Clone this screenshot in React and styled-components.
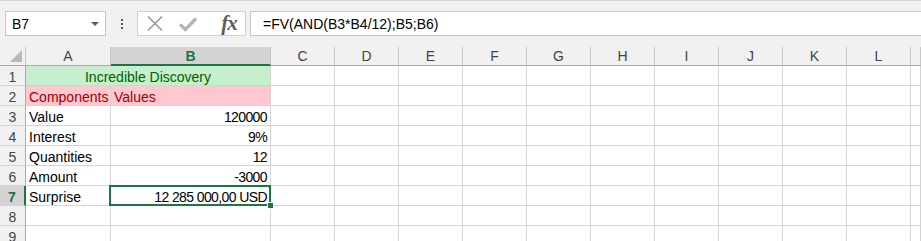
import React from 'react'
import styled, { createGlobalStyle, css } from 'styled-components'

const GREEN = '#217346'

const GlobalStyle = createGlobalStyle`
  html, body {
    margin: 0;
    padding: 0;
    background: #ffffff;
    overflow: hidden;
  }
  body {
    font-family: "Liberation Sans", Arial, sans-serif;
  }
`

const Page = styled.div`
  width: 921px;
  height: 241px;
  overflow: hidden;
  background: #ffffff;
`

const Toolbar = styled.div`
  box-sizing: border-box;
  height: 47px;
  display: flex;
  align-items: flex-start;
  padding: 10px 0 0 5px;
  background: #f1f1f1;
  border-top: 1px solid #d4d4d4;
`

const NameBox = styled.div`
  box-sizing: border-box;
  width: 101px;
  height: 25px;
  display: flex;
  align-items: center;
  justify-content: space-between;
  padding: 0 6px 0 6px;
  background: #ffffff;
  border: 1px solid #c6c6c6;
  font-size: 14px;
  color: #000;
`

const Caret = styled.span`
  width: 0;
  height: 0;
  border-left: 4px solid transparent;
  border-right: 4px solid transparent;
  border-top: 4px solid #5a5a5a;
`

const Dots = styled.div`
  width: 31px;
  height: 25px;
  display: flex;
  flex-direction: column;
  align-items: center;
  justify-content: center;
  gap: 2px;

  span {
    width: 2px;
    height: 2px;
    background: #5a5a5a;
  }
`

const FormulaButtons = styled.div`
  box-sizing: border-box;
  width: 109px;
  height: 25px;
  display: flex;
  align-items: center;
  padding-left: 8px;
  background: #ffffff;
  border: 1px solid #d0d0d0;
`

const IconSlot = styled.div`
  display: flex;
  align-items: center;
  justify-content: center;
  width: ${p => p.$w}px;
  margin-right: ${p => p.$gap || 0}px;
`

const Fx = styled.span`
  font-family: "Liberation Serif", "Times New Roman", serif;
  font-style: italic;
  font-weight: bold;
  font-size: 21px;
  line-height: 1;
  color: #5c5c5c;
  letter-spacing: -1px;
`

const FormulaInput = styled.div`
  box-sizing: border-box;
  flex: 1;
  height: 25px;
  margin-left: 4px;
  display: flex;
  align-items: center;
  padding-left: 12px;
  background: #ffffff;
  border: 1px solid #c6c6c6;
  border-right: none;
  font-size: 14px;
  color: #000;
`

const Sheet = styled.div`
  display: grid;
  grid-template-columns: 26px 85px 160px repeat(10, 64px) 1fr;
  grid-auto-rows: 20px;
  grid-template-rows: 19px;
  font-size: 14px;
`

const ColHead = styled.div`
  box-sizing: border-box;
  display: flex;
  align-items: center;
  justify-content: center;
  background: #f1f1f1;
  color: #444444;
  border-right: 1px solid #c8c8c8;
  border-bottom: 1px solid #ababab;
  ${p => p.$active && css`
    background: #d3d3d3;
    color: ${GREEN};
    font-weight: bold;
    border-bottom: 2px solid ${GREEN};
  `}
`

const Corner = styled.div`
  box-sizing: border-box;
  position: relative;
  background: #f1f1f1;
  border-right: 1px solid #c8c8c8;
  border-bottom: 1px solid #ababab;

  &::after {
    content: '';
    position: absolute;
    right: 3px;
    bottom: 3px;
    width: 0;
    height: 0;
    border-left: 12px solid transparent;
    border-bottom: 12px solid #b9b9b9;
  }
`

const RowHead = styled.div`
  box-sizing: border-box;
  display: flex;
  align-items: center;
  justify-content: center;
  padding-top: 2px;
  background: #f1f1f1;
  color: #444444;
  border-right: 1px solid #ababab;
  border-bottom: 1px solid #d4d4d4;
  ${p => p.$active && css`
    background: #d3d3d3;
    color: ${GREEN};
    font-weight: bold;
    border-right: 2px solid ${GREEN};
  `}
`

const Cell = styled.div`
  box-sizing: border-box;
  position: relative;
  display: flex;
  align-items: center;
  justify-content: ${p => (p.$align === 'right' ? 'flex-end' : p.$align === 'center' ? 'center' : 'flex-start')};
  padding: 2px 3px 0 3px;
  grid-column: ${p => (p.$span ? `span ${p.$span}` : 'auto')};
  background: ${p => p.$bg || '#ffffff'};
  color: ${p => p.$color || '#000000'};
  border-right: 1px solid #d4d4d4;
  border-bottom: 1px solid #d4d4d4;
  white-space: nowrap;
  letter-spacing: ${p => (p.$align === 'right' ? '-0.6px' : 'normal')};

  ${p => p.$selected && css`
    &::before {
      content: '';
      position: absolute;
      left: -2px;
      top: -1px;
      right: -1px;
      bottom: -1px;
      border: 2px solid ${GREEN};
      pointer-events: none;
    }
    &::after {
      content: '';
      position: absolute;
      right: -4px;
      bottom: -4px;
      width: 5px;
      height: 5px;
      background: ${GREEN};
      border: 1px solid #ffffff;
      z-index: 2;
    }
  `}
`

const columns = ['A', 'B', 'C', 'D', 'E', 'F', 'G', 'H', 'I', 'J', 'K', 'L']

const rows = [
  { n: 1, merged: { text: 'Incredible Discovery', bg: '#c6efce', color: '#006100' } },
  { n: 2, a: 'Components', b: 'Values', bg: '#ffc7ce', color: '#9c0006', bLeft: true },
  { n: 3, a: 'Value', b: '120000' },
  { n: 4, a: 'Interest', b: '9%' },
  { n: 5, a: 'Quantities', b: '12' },
  { n: 6, a: 'Amount', b: '-3000' },
  { n: 7, a: 'Surprise', b: '12 285 000,00 USD', selected: true },
  { n: 8 },
  { n: 9 },
]

const XIcon = () => (
  <svg width="18" height="17" viewBox="0 0 18 17">
    <path d="M2 1.5 L16 15.5 M16 1.5 L2 15.5" stroke="#9c9c9c" strokeWidth="1.7" fill="none" />
  </svg>
)

const CheckIcon = () => (
  <svg width="20" height="16" viewBox="0 0 20 16">
    <path d="M2 8.5 L7.5 13.5 L18 2.5" stroke="#b5b5b5" strokeWidth="3.4" fill="none" strokeLinejoin="miter" />
  </svg>
)

const SheetRow = ({ row }) => {
  const rest = columns.slice(2).map(c => <Cell key={c} />)
  return (
    <>
      <RowHead $active={row.selected}>{row.n}</RowHead>
      {row.merged ? (
        <Cell $span={2} $align="center" $bg={row.merged.bg} $color={row.merged.color}>
          {row.merged.text}
        </Cell>
      ) : (
        <>
          <Cell $bg={row.bg} $color={row.color}>{row.a}</Cell>
          <Cell $bg={row.bg} $color={row.color} $align={row.bLeft ? 'left' : 'right'} $selected={row.selected}>
            {row.b}
          </Cell>
        </>
      )}
      {rest}
      <Cell />
    </>
  )
}

export default function App() {
  return (
    <Page>
      <GlobalStyle />
      <Toolbar>
        <NameBox>
          B7
          <Caret />
        </NameBox>
        <Dots>
          <span />
          <span />
          <span />
        </Dots>
        <FormulaButtons>
          <IconSlot $w={18} $gap={14}><XIcon /></IconSlot>
          <IconSlot $w={20} $gap={22}><CheckIcon /></IconSlot>
          <IconSlot $w={18}><Fx>fx</Fx></IconSlot>
        </FormulaButtons>
        <FormulaInput>=FV(AND(B3*B4/12);B5;B6)</FormulaInput>
      </Toolbar>
      <Sheet>
        <Corner />
        {columns.map(c => (
          <ColHead key={c} $active={c === 'B'}>{c}</ColHead>
        ))}
        <ColHead />
        {rows.map(r => (
          <SheetRow key={r.n} row={r} />
        ))}
      </Sheet>
    </Page>
  )
}
